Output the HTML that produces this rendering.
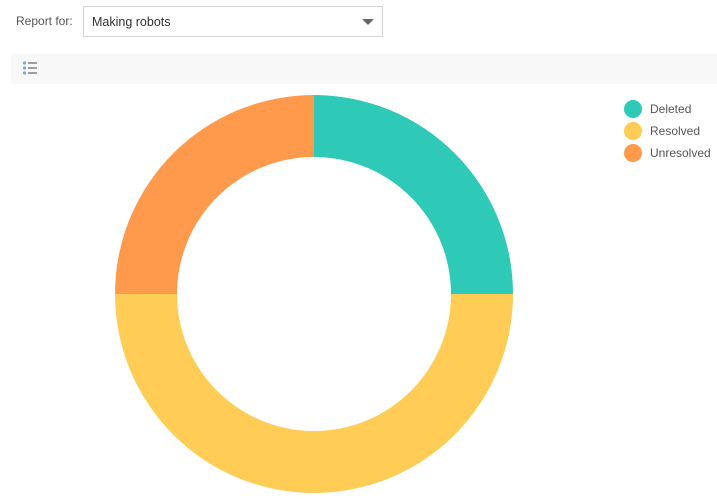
<!DOCTYPE html>
<html><head><style>
body{margin:0;width:717px;height:499px;background:#fff;font-family:"Liberation Sans",sans-serif;position:relative;overflow:hidden}
.lbl{position:absolute;left:16px;top:14px;font-size:12px;color:#555}
.sel{position:absolute;left:83px;top:6px;width:298px;height:29px;border:1px solid #d5d5d5;box-sizing:border-box;width:300px;height:31px}
.sel span{position:absolute;left:8px;top:8px;font-size:12.5px;color:#333}
.arr{position:absolute;right:8px;top:12px;width:0;height:0;border-left:6px solid transparent;border-right:6px solid transparent;border-top:6px solid #666}
.bar{position:absolute;left:11px;top:54px;width:706px;height:30px;background:#f8f8f8}
.lg{position:absolute;left:650px;font-size:12px;color:#555}
</style></head><body>
<div class="lbl">Report for:</div>
<div class="sel"><span>Making robots</span><div class="arr"></div></div>
<div class="bar">
<svg style="position:absolute;left:11px;top:6px" width="16" height="16" viewBox="0 0 16 16">
<circle cx="2.5" cy="3" r="1.6" fill="#7aa7d8"/><circle cx="2.5" cy="8" r="1.6" fill="#7aa7d8"/><circle cx="2.5" cy="13" r="1.6" fill="#7aa7d8"/>
<path d="M6 3H15M6 8H15M6 13H15" stroke="#445" stroke-width="1"/>
</svg></div>
<svg style="position:absolute;left:0;top:0" width="717" height="499">
<g transform="translate(314,294)">
<path d="M0,-199 A199,199 0 0 1 199,0 L137,0 A137,137 0 0 0 0,-137Z" fill="#2ecab7"/>
<path d="M199,0 A199,199 0 0 1 -199,0 L-137,0 A137,137 0 0 0 137,0Z" fill="#ffcd56"/>
<path d="M-199,0 A199,199 0 0 1 0,-199 L0,-137 A137,137 0 0 0 -137,0Z" fill="#ff9a4d"/>
</g>
<circle cx="633" cy="109" r="9" fill="#2ecab7"/>
<circle cx="633" cy="131" r="9" fill="#ffcd56"/>
<circle cx="633" cy="153" r="9" fill="#ff9a4d"/>
</svg>
<div class="lg" style="top:102px">Deleted</div>
<div class="lg" style="top:124px">Resolved</div>
<div class="lg" style="top:146px">Unresolved</div>
</body></html>
